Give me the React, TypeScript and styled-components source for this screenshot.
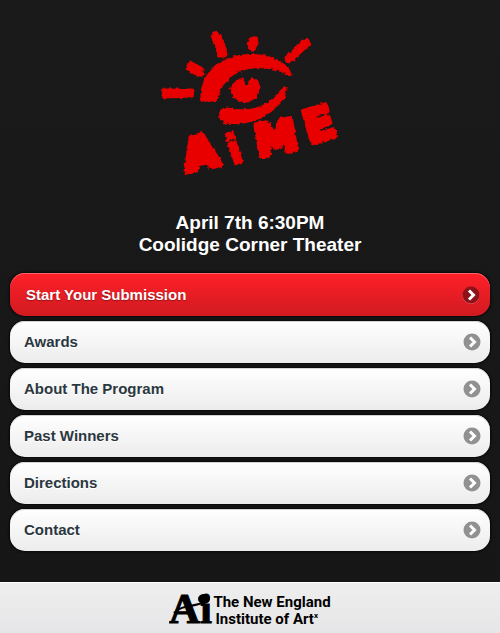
import React from "react";
import styled, { createGlobalStyle, css } from "styled-components";

const GlobalStyle = createGlobalStyle`
  *, *::before, *::after { box-sizing: border-box; }
  body {
    margin: 0;
    background: #181818;
    font-family: "Liberation Sans", Arial, Helvetica, sans-serif;
  }
`;

const Page = styled.div`
  display: flex;
  flex-direction: column;
  min-height: 100vh;
  background: linear-gradient(#1a1a1a, #161616);
`;

const Header = styled.header`
  display: flex;
  flex-direction: column;
  align-items: center;
  padding-top: 24px;
`;

const Logo = styled.svg`
  display: block;
  overflow: visible;
  width: 192px;
  height: 156px;
`;

const Brush = styled.text`
  font-family: "DejaVu Sans", Verdana, sans-serif;
  font-weight: 700;
  stroke: #e80000;
  stroke-linejoin: round;
`;

const EventTitle = styled.h1`
  margin: 32px 0 0;
  color: #fff;
  font-size: 19px;
  line-height: 22px;
  font-weight: 700;
  text-align: center;
`;

const Menu = styled.nav`
  display: flex;
  flex-direction: column;
  gap: 5px;
  padding: 17px 10px 31px;
`;

const MenuLink = styled.a<{ $primary?: boolean }>`
  display: flex;
  align-items: center;
  justify-content: space-between;
  height: 42px;
  padding: 0 9px 0 14px;
  border-radius: 15px;
  font-size: 15px;
  line-height: 20px;
  font-weight: 700;
  text-decoration: none;
  color: #2b3740;
  background: linear-gradient(#ffffff, #ececec);
  box-shadow: 0 0 2px 1px #070707, inset 0 1px 0 #d4d4d4;
  text-shadow: 0 1px 0 #fff;
  ${({ $primary }) =>
    $primary &&
    css`
      height: 43px;
      padding: 0 10px 0 16px;
      color: #fff;
      background: linear-gradient(#ff2029, #d01a20);
      box-shadow: 0 0 2px 1px #070707, inset 0 1px 0 #ff626a;
      text-shadow: 0 1px 1px #8f1519;
    `}
`;

const Arrow = styled.svg`
  display: block;
  flex: none;
  width: 18px;
  height: 18px;
`;

const Footer = styled.footer`
  display: flex;
  flex: 1;
  align-items: flex-start;
  justify-content: center;
  border-top: 1px solid #fff;
  background: linear-gradient(#eeeeee, #e6e6e8);
`;

const SchoolMark = styled.svg`
  display: block;
  width: 44px;
  height: 50px;
`;

const SerifLetters = styled.text`
  font-family: "Liberation Serif", "Times New Roman", serif;
  font-weight: 700;
`;

const SchoolName = styled.div`
  padding-top: 11px;
  color: #000;
  font-family: Roboto, "Liberation Sans", sans-serif;
  font-size: 15px;
  line-height: 17px;
  font-weight: 700;
`;

const SecondLine = styled.div`
  padding-left: 2px;
`;

const Mark = styled.sup`
  font-size: 8px;
  line-height: 0;
`;

const items = [
  { label: "Start Your Submission", primary: true },
  { label: "Awards" },
  { label: "About The Program" },
  { label: "Past Winners" },
  { label: "Directions" },
  { label: "Contact" },
];

function AimeLogo() {
  return (
    <Logo viewBox="154 24 192 156" role="img" aria-label="AiME">
      <defs>
        <filter
          id="rough"
          x="-5%"
          y="-5%"
          width="110%"
          height="110%"
          colorInterpolationFilters="sRGB"
        >
          <feTurbulence type="fractalNoise" baseFrequency="0.3" numOctaves="1" seed="4" />
          <feDisplacementMap in="SourceGraphic" scale="4" xChannelSelector="R" yChannelSelector="G" />
        </filter>
      </defs>
      <g fill="#e80000" stroke="#e80000" strokeLinejoin="round" filter="url(#rough)">
        <path d="M163 89 L194 89 L193 97 L163 98 L162 93Z" />
        <path d="M190 61 L203 68 L203 76 L198 76 L186 70Z" />
        <path d="M212 33 L216 31 L221 36 L225 46 L228 53 L225 58 L219 58 L216 47 L212 39Z" />
        <path d="M250 37 L257 37 L258 43 L255 50 L250 50 L247 45Z" />
        <path d="M306 38 L311 44 L290 63 L286 62 L285 57Z" />
        <path d="M201 101 C200 82 208 70 222 62 C240 51 267 53 281 62 C288 67 291 71 291 76 C277 68 258 65 243 70 C230 74 219 87 218 98 L215 101Z" />
        <path d="M230 89 L236 81 L243 78 L245 85 L249 84 L251 79 L256 79 L260 86 L257 97 L248 102 L239 101 L233 96Z" />
        <path d="M220 111 Q222 108 228 108 C251 114 272 105 284 87 L286 87 C287 100 274 111 262 117 C249 124 237 124 225 123 Q218 121 220 111Z" />
        <Brush fontSize="43" strokeWidth="7" transform="translate(187 171) rotate(-12)">A</Brush>
        <Brush fontSize="41" strokeWidth="2" transform="translate(232 165) rotate(-18)">i</Brush>
        <Brush fontSize="42" strokeWidth="6" transform="translate(258 156) rotate(-10)">M</Brush>
        <Brush fontSize="45" strokeWidth="5" transform="translate(309 144) rotate(-17)">E</Brush>
      </g>
    </Logo>
  );
}

function ArrowIcon({ primary }: { primary?: boolean }) {
  return (
    <Arrow viewBox="0 0 18 18" aria-hidden="true">
      {primary && <circle cx="9" cy="9.5" r="8.5" fill="#f0656b" />}
      <circle cx="9" cy="9" r="8.5" fill={primary ? "#8c1118" : "#919191"} />
      <path d="M7 4.5 L11.5 9 L7 13.5" fill="none" stroke="#fff" strokeWidth="3" />
    </Arrow>
  );
}

export default function App() {
  return (
    <Page>
      <GlobalStyle />
      <Header>
        <AimeLogo />
        <EventTitle>
          April 7th 6:30PM
          <br />
          Coolidge Corner Theater
        </EventTitle>
      </Header>
      <Menu aria-label="Main">
        {items.map(({ label, primary }) => (
          <MenuLink href="#" key={label} $primary={primary}>
            {label}
            <ArrowIcon primary={primary} />
          </MenuLink>
        ))}
      </Menu>
      <Footer>
        <SchoolMark viewBox="168 583 44 50" aria-hidden="true">
          <SerifLetters x="168" y="623" fontSize="43" stroke="#000" strokeWidth="1">Ai</SerifLetters>
          <ellipse cx="203" cy="599" rx="6" ry="5" />
          <path d="M173 613 C182 604 191 608 203 602" fill="none" stroke="#000" strokeWidth="2" />
        </SchoolMark>
        <SchoolName>
          <div>The New England</div>
          <SecondLine>
            Institute of Art<Mark>x</Mark>
          </SecondLine>
        </SchoolName>
      </Footer>
    </Page>
  );
}
